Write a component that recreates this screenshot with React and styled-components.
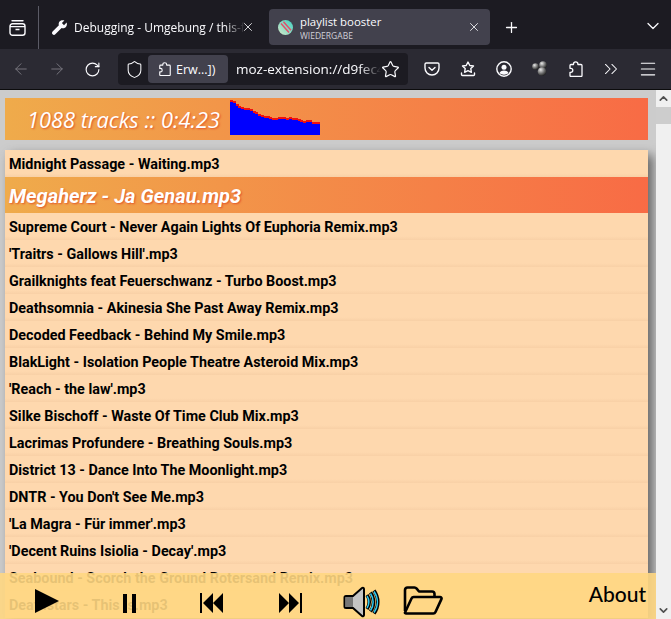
import React from "react";
import styled, { createGlobalStyle } from "styled-components";
import {
  ArrowLeft,
  ArrowRight,
  RotateCw,
  Shield,
  Star,
  X,
  Plus,
  ChevronDown,
  ChevronUp,
  ChevronsRight,
  Menu,
} from "lucide-react";

const GlobalStyle = createGlobalStyle`
  html, body {
    margin: 0;
    padding: 0;
    overflow: hidden;
    background: #ccc;
  }
`;

const Window = styled.div`
  width: 671px;
  height: 619px;
  display: flex;
  flex-direction: column;
  overflow: hidden;
  font-family: "Open Sans", "Noto Sans", sans-serif;
`;

const TabBar = styled.div`
  height: 49px;
  flex: none;
  background: #1c1b22;
  display: flex;
  align-items: center;
  color: #fbfbfe;
`;

const ViewButton = styled.div`
  width: 39px;
  height: 43px;
  margin-top: 6px;
  flex: none;
  display: flex;
  align-items: center;
  padding-left: 9px;
  box-sizing: border-box;
  border-right: 1px solid #5b5b66;
`;

const Tab = styled.div`
  width: 221px;
  height: 36px;
  margin-top: 5px;
  flex: none;
  box-sizing: border-box;
  display: flex;
  align-items: center;
  border-radius: 4px;
  padding: ${({ $active }) => ($active ? "0 9px" : "0 4px 0 13px")};
  background: ${({ $active }) => ($active ? "#42414d" : "transparent")};
  margin-left: ${({ $active }) => ($active ? "9px" : "0")};
`;

const TabText = styled.div`
  flex: 1;
  min-width: 0;
  margin-left: 7px;
  display: flex;
  flex-direction: column;
  overflow: hidden;
`;

const TabTitle = styled.span`
  font-size: ${({ $fade }) => ($fade ? "12px" : "11.4px")};
  line-height: 16px;
  padding-top: 1px;
  white-space: nowrap;
  color: #fbfbfe;
  ${({ $fade }) =>
    $fade &&
    `-webkit-mask-image: linear-gradient(to right, #000 88%, transparent 100%);`}
`;

const TabSub = styled.span`
  font-size: 8.5px;
  line-height: 11px;
  color: #d0d0d8;
  white-space: nowrap;
`;

const TabClose = styled.div`
  flex: none;
  display: flex;
  margin: ${({ $active }) => ($active ? "0" : "0 1px 0 -4px")};
`;

const NewTab = styled.div`
  margin: 5px 0 0 13px;
  display: flex;
`;

const TabSpacer = styled.div`
  flex: 1;
`;

const AllTabs = styled.div`
  margin: 3px 8px 0 0;
  display: flex;
`;

const Toolbar = styled.div`
  height: 41px;
  flex: none;
  box-sizing: border-box;
  background: #2b2a33;
  border-bottom: 1px solid #0c0c0d;
  display: flex;
  align-items: center;
  padding-left: 12px;
  color: #fbfbfe;
`;

const NavIcon = styled.div`
  width: ${({ $w }) => $w}px;
  flex: none;
  display: flex;
  color: ${({ $dim }) => ($dim ? "#77767e" : "#fbfbfe")};
`;

const UrlBar = styled.div`
  width: 290px;
  height: 32px;
  flex: none;
  background: #1c1b22;
  border-radius: 4px;
  display: flex;
  align-items: center;
  box-sizing: border-box;
  padding-left: 7px;
`;

const Chip = styled.div`
  width: 80px;
  height: 28px;
  margin-left: 4px;
  flex: none;
  box-sizing: border-box;
  background: #42414d;
  border-radius: 4px;
  display: flex;
  align-items: center;
  padding-left: 10px;
  gap: 4px;
  font-size: 12.5px;
`;

const UrlText = styled.div`
  width: 145px;
  margin-left: 8px;
  flex: none;
  font-size: 13.5px;
  white-space: nowrap;
  overflow: hidden;
  -webkit-mask-image: linear-gradient(to right, #000 85%, transparent 100%);
`;

const ToolIcons = styled.div`
  display: flex;
  align-items: center;
  margin-left: 16px;
  gap: 20px;
`;

const WideToolIcon = styled.div`
  width: 16px;
  flex: none;
  display: flex;
  justify-content: center;
  margin-left: ${({ $shift }) => $shift || 0}px;
`;

const PageArea = styled.div`
  flex: 1;
  min-height: 0;
  display: flex;
`;

const Viewport = styled.div`
  position: relative;
  width: 656px;
  flex: none;
  overflow: hidden;
  background: #ccc;
  padding: 8px 8px 0 5px;
  box-sizing: border-box;
`;

const Scrollbar = styled.div`
  width: 15px;
  flex: none;
  background: #f0f0f0;
  display: flex;
  flex-direction: column;
  color: #505050;
`;

const ScrollArrow = styled.div`
  height: 17px;
  flex: none;
  display: flex;
  align-items: center;
  justify-content: center;
`;

const ScrollThumb = styled.div`
  height: 17px;
  flex: none;
  background: #cdcdcd;
`;

const ScrollTrack = styled.div`
  flex: 1;
`;

const Header = styled.header`
  height: 42px;
  background: linear-gradient(to right, #efab4b, #f86b45);
  display: flex;
  align-items: center;
`;

const Stats = styled.div`
  margin-left: 22px;
  width: 203px;
  flex: none;
  font-family: "Open Sans", "Lato", sans-serif;
  font-style: italic;
  font-size: 21.8px;
  color: #fff;
  text-shadow: 1px 1px 2px #e2552a;
  white-space: nowrap;
`;

const Tracks = styled.ol`
  list-style: none;
  margin: 10px 0 0;
  padding: 0;
  box-shadow: 5px 5px 10px #666;
`;

const Track = styled.li`
  height: 27px;
  box-sizing: border-box;
  padding-left: 4px;
  background: linear-gradient(to bottom, #fed8ae 86%, #f8d0a6 100%);
  font-family: Roboto, "Liberation Sans", sans-serif;
  font-weight: 700;
  font-size: 14.35px;
  line-height: 30px;
  color: #000;
  white-space: nowrap;
`;

const ActiveTrack = styled(Track)`
  height: 36px;
  background: linear-gradient(to right, #efab4b, #f86b45);
  font-style: italic;
  font-size: 20.1px;
  line-height: 38px;
  color: #fff;
  text-shadow: 1px 1px 2px #e2552a;
`;

const Controls = styled.footer`
  position: absolute;
  left: 0;
  right: 0;
  bottom: 0;
  height: 46px;
  background: rgba(255, 215, 130, 0.9);
  display: flex;
  align-items: flex-end;
`;

const ControlButton = styled.div`
  flex: none;
  display: flex;
  width: ${({ $w }) => $w}px;
  margin-left: ${({ $left }) => $left}px;
  margin-bottom: ${({ $bottom }) => $bottom}px;
`;

const AboutLink = styled.a`
  margin: 0 10px 12px auto;
  font-family: "Lato", "Open Sans", sans-serif;
  font-size: 21px;
  font-weight: 500;
  line-height: 26px;
  color: #000;
`;

const FirefoxViewIcon = () => (
  <svg width="17" height="16" viewBox="0 0 17 16" fill="none" stroke="#fbfbfe" strokeWidth="1.4">
    <path d="M3 .8h11" strokeLinecap="round" />
    <rect x="1" y="3.7" width="15" height="11.5" rx="2.5" />
    <path d="M1 6.6h15M6.5 9.5h4" />
  </svg>
);

const WrenchIcon = () => (
  <svg width="15" height="15" viewBox="0 0 15 15" fill="#fbfbfe">
    <path d="M14.6 2.6 12 5.2 9.9 3 12.4.5C10.5-.3 8.2.3 7.2 2c-.6 1-.7 2.200-.3 3.300L.6 11.600c-.8.8-.8 2 0 2.700.8.8 2 .8 2.700 0L9.600 8c1.100.4 2.300.3 3.300-.3 1.700-1 2.500-3.200 1.700-5.100z" />
  </svg>
);

const PlaylistFavicon = () => (
  <svg width="15" height="15" viewBox="0 0 15 15" style={{ flex: "none" }}>
    <defs>
      <linearGradient id="fav" x1="0" y1="1" x2="1" y2="0">
        <stop offset="0" stopColor="#d8e8c8" />
        <stop offset="1" stopColor="#3fd0c0" />
      </linearGradient>
    </defs>
    <circle cx="7.500" cy="7.500" r="7.500" fill="url(#fav)" />
    <path d="M3 3.500 11 12.500M5.500 1.800l7.500 8.500" stroke="#e0506a" strokeWidth="1.500" />
  </svg>
);

const PuzzleIcon = ({ size = 16 }) => (
  <svg width={size} height={size} viewBox="0 0 16 16" fill="none" stroke="#fbfbfe" strokeWidth="1.300" strokeLinejoin="round" style={{ flex: "none" }}>
    <path d="M5.500 3.500V3a2.200 2.200 0 0 1 4.400 0v.5h3.100c.6 0 1 .4 1 1v10c0 .6-.4 1-1 1H3c-.6 0-1-.4-1-1v-3.200h.8a2 2 0 0 0 0-4H2V4.500c0-.6.4-1 1-1z" />
  </svg>
);

const PocketIcon = () => (
  <svg width="16" height="16" viewBox="0 0 16 16" fill="none" stroke="#fbfbfe" strokeWidth="1.400" strokeLinecap="round" strokeLinejoin="round">
    <path d="M2.300 2h11.400c.7 0 1.300.6 1.300 1.300V7c0 3.900-3.100 7-7 7s-7-3.100-7-7V3.300C1 2.600 1.600 2 2.300 2z" />
    <path d="M5 6.500 8 9.300l3-2.800" />
  </svg>
);

const SavedIcon = () => (
  <svg width="16" height="16" viewBox="0 0 16 16" fill="none" stroke="#fbfbfe" strokeWidth="1.400" strokeLinejoin="round">
    <path d="M8 1l1.800 3.500 3.700.5-2.700 2.600.6 3.700L8 9.600l-3.400 1.700.6-3.700L2.500 5l3.700-.5z" />
    <path d="M1.500 12v1.500c0 .6.400 1 1 1h11c.6 0 1-.4 1-1V12" strokeLinecap="round" />
  </svg>
);

const AccountIcon = () => (
  <svg width="16" height="16" viewBox="0 0 16 16" fill="none" stroke="#fbfbfe" strokeWidth="1.400">
    <circle cx="8" cy="8" r="7.200" />
    <circle cx="8" cy="6.300" r="2.500" fill="#fbfbfe" stroke="none" />
    <path d="M3.500 12c1-1.800 2.600-2.500 4.500-2.500s3.500.7 4.500 2.500c-1.200 1.100-2.800 1.700-4.500 1.700S4.700 13.100 3.500 12z" fill="#fbfbfe" stroke="none" />
  </svg>
);

const BallsIcon = () => (
  <svg width="16" height="16" viewBox="0 0 16 16">
    <defs>
      <radialGradient id="ball" cx="0.350" cy="0.300" r="0.800">
        <stop offset="0" stopColor="#e8e8e8" />
        <stop offset="0.500" stopColor="#777" />
        <stop offset="1" stopColor="#111" />
      </radialGradient>
    </defs>
    <circle cx="11" cy="4" r="3.800" fill="url(#ball)" />
    <circle cx="3.500" cy="5.500" r="3.300" fill="url(#ball)" />
    <circle cx="10" cy="10.500" r="4.300" fill="url(#ball)" />
  </svg>
);

const PrevIcon = () => (
  <svg width="24" height="20" viewBox="0 0 24 20">
    <path d="M1 0h2v20H1zM14 0v20L4 10zM24 0v20L14 10z" />
  </svg>
);

const NextIcon = () => (
  <svg width="24" height="20" viewBox="0 0 24 20">
    <path d="M21 0h2v20h-2zM10 0v20l10-10zM0 0v20l10-10z" />
  </svg>
);

const VolumeIcon = () => (
  <svg width="37" height="32" viewBox="0 0 37 32" fill="none">
    <path d="M1.500 11.500c0-1 .8-1.500 1.500-1.500h7l9-8c.9-.7 2-.2 2 1v26c0 1.200-1.100 1.700-2 1l-9-8H3c-.7 0-1.500-.5-1.500-1.500z" fill="#c4c4c4" stroke="#000" strokeWidth="2" />
    <path d="M2.500 11h7.500v10H2.500z" fill="#777" />
    <path d="M24 9c3 4 3 10 0 14M27.500 6.500c4 5.500 4 13.500 0 19M31 4.500c5 7 5 16 0 23" stroke="#000" strokeWidth="3.600" />
    <path d="M24 10c2.500 3.500 2.500 8.500 0 12M27.500 7.500c3.500 5 3.500 12 0 17M31 5.500c4.500 6.500 4.500 14.500 0 21" stroke="#2fc8f0" strokeWidth="1.500" />
  </svg>
);

const FolderIcon = () => (
  <svg width="40" height="29" viewBox="0 0 40 29" fill="none" stroke="#000" strokeWidth="2.600" strokeLinejoin="round">
    <path d="M2 25V4c0-1.400 1-2.500 2.500-2.500h7c1 0 1.600.5 2.200 1.200L16 5.500h13c1.400 0 2.500 1 2.500 2.500v3" />
    <path d="M2 26.500l6.500-14c.4-.9 1.200-1.500 2.200-1.500H37c1.200 0 1.900 1 1.400 2.100L32.500 26c-.4.900-1.200 1.500-2.200 1.500H3c-.7 0-1.200-.5-1-1z" />
  </svg>
);

// levels of the spectrum, px high, left to right
const levels = [
  33, 32, 29, 27, 26, 25, 25, 24, 22, 21, 19, 18, 17, 17, 16, 15, 15, 16, 16,
  16, 15, 16, 15, 15, 14, 13, 12, 13, 13, 11, 11, 11,
];

const Spectrum = () => (
  <svg
    width="90"
    height="36"
    viewBox="0 0 90 36"
    shapeRendering="crispEdges"
    style={{ flex: "none", alignSelf: "flex-start", marginTop: "1px" }}
  >
    {levels.map((h, i) => (
      <g key={i}>
        <rect x={i * 2.8125} y={36 - h} width="3" height={h} fill="#0000ff" />
        <rect x={i * 2.8125} y={36 - h - 2} width="3" height="2" fill="#f01010" />
      </g>
    ))}
  </svg>
);

const playlist = [
  "Supreme Court - Never Again Lights Of Euphoria Remix.mp3",
  "'Traitrs - Gallows Hill'.mp3",
  "Grailknights feat Feuerschwanz - Turbo Boost.mp3",
  "Deathsomnia - Akinesia She Past Away Remix.mp3",
  "Decoded Feedback - Behind My Smile.mp3",
  "BlakLight - Isolation People Theatre Asteroid Mix.mp3",
  "'Reach - the law'.mp3",
  "Silke Bischoff - Waste Of Time Club Mix.mp3",
  "Lacrimas Profundere - Breathing Souls.mp3",
  "District 13 - Dance Into The Moonlight.mp3",
  "DNTR - You Don't See Me.mp3",
  "'La Magra - Für immer'.mp3",
  "'Decent Ruins Isiolia - Decay'.mp3",
  "Seabound - Scorch the Ground Rotersand Remix.mp3",
  "Deathstars - This Is.mp3",
];

export default function App() {
  return (
    <Window>
      <GlobalStyle />
      <TabBar>
        <ViewButton>
          <FirefoxViewIcon />
        </ViewButton>
        <Tab>
          <WrenchIcon />
          <TabText>
            <TabTitle $fade>Debugging - Umgebung / this-firefox</TabTitle>
          </TabText>
          <TabClose>
            <X size={14} strokeWidth={1.4} />
          </TabClose>
        </Tab>
        <Tab $active>
          <PlaylistFavicon />
          <TabText>
            <TabTitle>playlist booster</TabTitle>
            <TabSub>WIEDERGABE</TabSub>
          </TabText>
          <TabClose $active>
            <X size={14} strokeWidth={1.4} />
          </TabClose>
        </Tab>
        <NewTab>
          <Plus size={17} strokeWidth={1.8} />
        </NewTab>
        <TabSpacer />
        <AllTabs>
          <ChevronDown size={20} strokeWidth={1.5} />
        </AllTabs>
      </TabBar>
      <Toolbar>
        <NavIcon $w={36} $dim>
          <ArrowLeft size={18} strokeWidth={1.3} />
        </NavIcon>
        <NavIcon $w={36} $dim>
          <ArrowRight size={18} strokeWidth={1.3} />
        </NavIcon>
        <NavIcon $w={34}>
          <RotateCw size={17} strokeWidth={1.6} />
        </NavIcon>
        <UrlBar>
          <Shield size={19} strokeWidth={1.3} style={{ flex: "none" }} />
          <Chip>
            <PuzzleIcon size={14} />
            Erw...])
          </Chip>
          <UrlText>moz-extension://d9fec4a1</UrlText>
          <Star size={19} strokeWidth={1.5} style={{ flex: "none" }} />
        </UrlBar>
        <ToolIcons>
          <PocketIcon />
          <SavedIcon />
          <AccountIcon />
          <BallsIcon />
          <PuzzleIcon />
          <WideToolIcon $shift={-1}>
            <ChevronsRight size={22} strokeWidth={1.1} style={{ flex: "none" }} />
          </WideToolIcon>
          <WideToolIcon $shift={1}>
            <Menu size={20} strokeWidth={1.3} style={{ flex: "none" }} />
          </WideToolIcon>
        </ToolIcons>
      </Toolbar>
      <PageArea>
        <Viewport>
          <Header>
            <Stats>1088 tracks :: 0:4:23</Stats>
            <Spectrum />
          </Header>
          <Tracks>
            <Track>Midnight Passage - Waiting.mp3</Track>
            <ActiveTrack>Megaherz - Ja Genau.mp3</ActiveTrack>
            {playlist.map((name) => (
              <Track key={name}>{name}</Track>
            ))}
          </Tracks>
          <Controls>
            <ControlButton $w={24} $left={35} $bottom={6}>
              <svg width="24" height="24" viewBox="0 0 24 24">
                <path d="M0 0l24 12L0 24z" />
              </svg>
            </ControlButton>
            <ControlButton $w={13} $left={64} $bottom={6}>
              <svg width="13" height="19" viewBox="0 0 13 19">
                <path d="M0 0h4v19H0zM9 0h4v19H9z" />
              </svg>
            </ControlButton>
            <ControlButton $w={24} $left={63} $bottom={6}>
              <PrevIcon />
            </ControlButton>
            <ControlButton $w={24} $left={56} $bottom={6}>
              <NextIcon />
            </ControlButton>
            <ControlButton $w={37} $left={40} $bottom={1}>
              <VolumeIcon />
            </ControlButton>
            <ControlButton $w={40} $left={23} $bottom={4}>
              <FolderIcon />
            </ControlButton>
            <AboutLink>About</AboutLink>
          </Controls>
        </Viewport>
        <Scrollbar>
          <ScrollArrow>
            <ChevronUp size={13} strokeWidth={3} />
          </ScrollArrow>
          <ScrollThumb />
          <ScrollTrack />
          <ScrollArrow>
            <ChevronDown size={13} strokeWidth={3} />
          </ScrollArrow>
        </Scrollbar>
      </PageArea>
    </Window>
  );
}
